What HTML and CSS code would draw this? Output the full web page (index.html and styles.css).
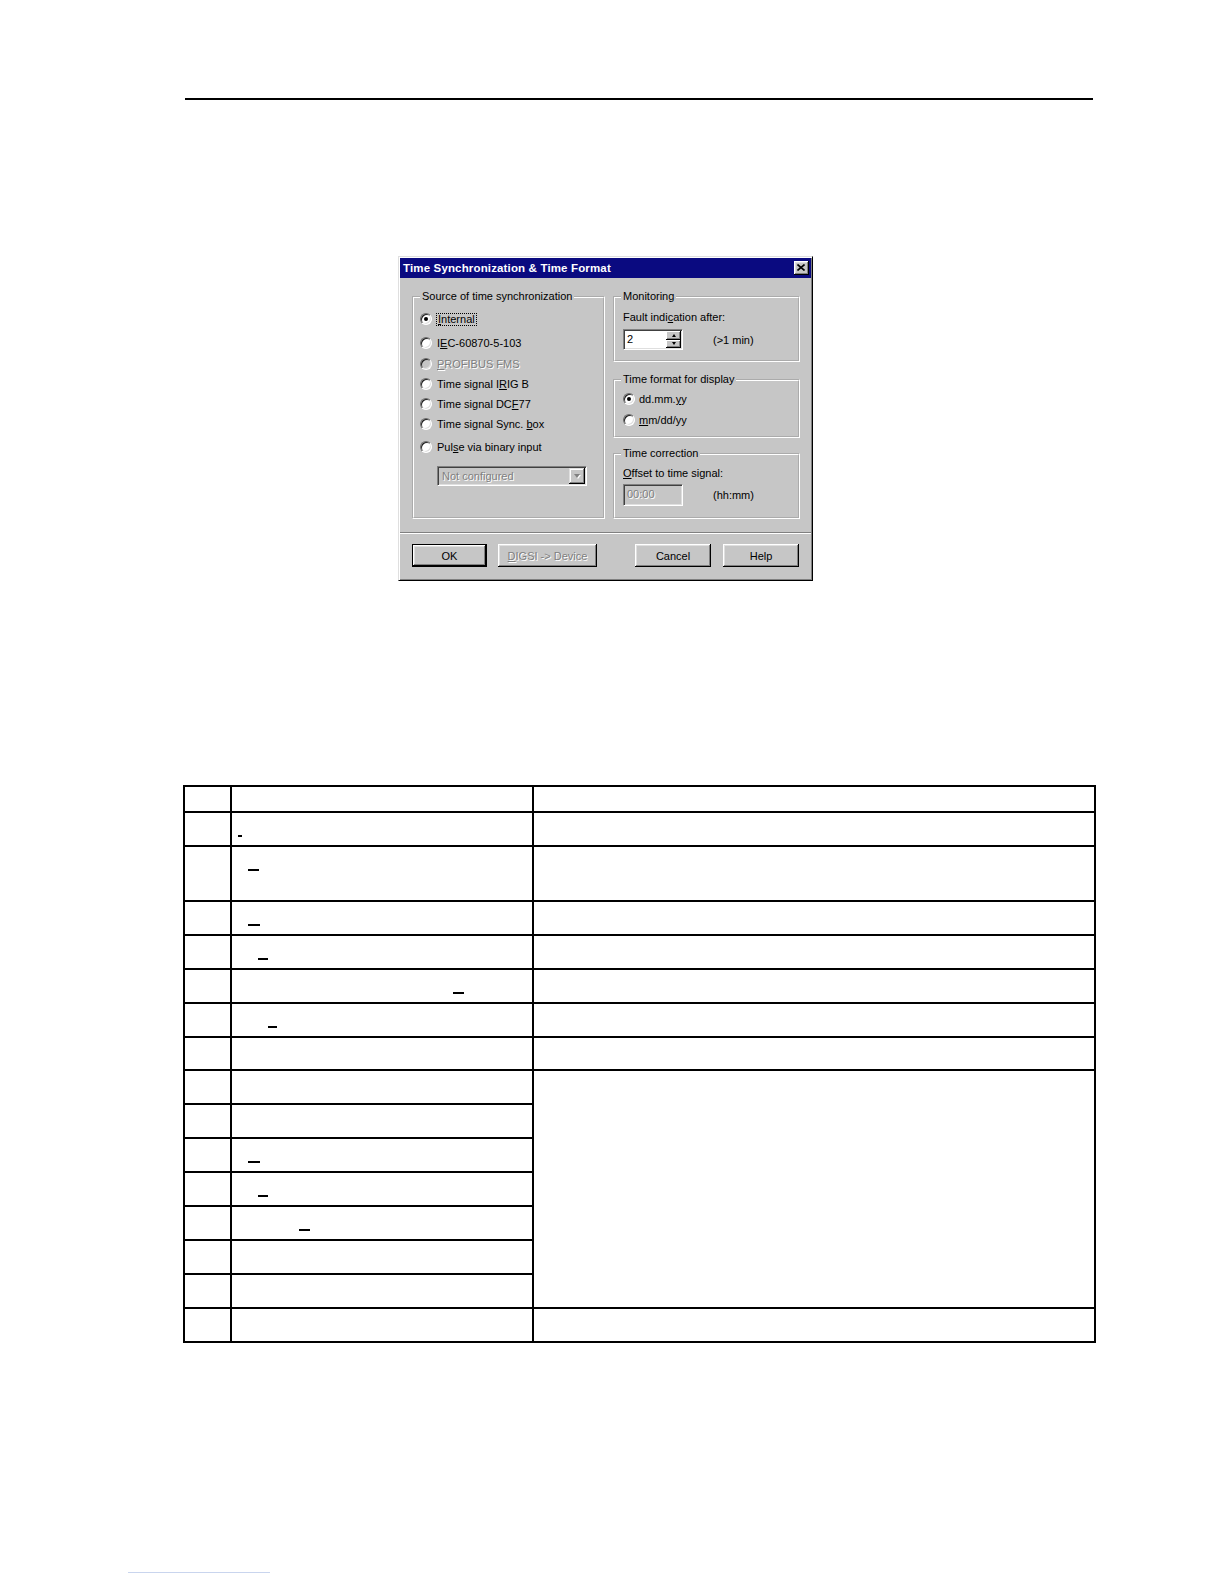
FILE: index.html
```html
<!DOCTYPE html>
<html>
<head>
<meta charset="utf-8">
<title>Time Synchronization &amp; Time Format</title>
<link rel="stylesheet" href="styles.css">
</head>
<body>
<div class="rule"></div>

<div class="dialog">
  <div class="titlebar">
    <span class="title">Time Synchronization &amp; Time Format</span>
    <span class="close"><svg width="8" height="7" viewBox="0 0 8 7"><path d="M0.5 0.5 L7.5 6.5 M7.5 0.5 L0.5 6.5" stroke="#000" stroke-width="1.6" fill="none"/></svg></span>
  </div>
  <div class="dlg-body">
    <fieldset class="group src">
      <legend>Source of time synchronization</legend>
      <div class="opt o-int"><span class="radio on"></span><span class="focus"><u>I</u>nternal</span></div>
      <div class="opt o-iec"><span class="radio"></span><span>I<u>E</u>C-60870-5-103</span></div>
      <div class="opt o-prof"><span class="radio dis"></span><span class="dtext"><u>P</u>ROFIBUS FMS</span></div>
      <div class="opt"><span class="radio"></span><span>Time signal I<u>R</u>IG B</span></div>
      <div class="opt"><span class="radio"></span><span>Time signal DC<u>F</u>77</span></div>
      <div class="opt"><span class="radio"></span><span>Time signal Sync. <u>b</u>ox</span></div>
      <div class="opt o-pulse"><span class="radio"></span><span>Pul<u>s</u>e via binary input</span></div>
      <div class="combo">
        <span class="combo-text dtext">Not configured</span>
        <span class="combo-btn"><span class="combo-arrow"></span></span>
      </div>
    </fieldset>
    <div class="right">
      <fieldset class="group mon">
        <legend>Monitoring</legend>
        <div class="line l-fault">Fault indi<u>c</u>ation after:</div>
        <div class="field-row r-spin">
          <div class="spinbox">
            <span class="spin-text">2</span>
            <span class="spin-btns">
              <span class="spin-btn"><span class="arr-up"></span></span>
              <span class="spin-btn"><span class="arr-down"></span></span>
            </span>
          </div>
          <span class="unit">(&gt;1 min)</span>
        </div>
      </fieldset>
      <fieldset class="group fmt">
        <legend>Time format for display</legend>
        <div class="opt o-dd"><span class="radio on"></span><span>dd.mm.<u>y</u>y</span></div>
        <div class="opt o-mm"><span class="radio"></span><span><u>m</u>m/dd/yy</span></div>
      </fieldset>
      <fieldset class="group cor">
        <legend>Time correction</legend>
        <div class="line l-offset"><u>O</u>ffset to time signal:</div>
        <div class="field-row r-off">
          <div class="textbox"><span class="dtext">00:00</span></div>
          <span class="unit">(hh:mm)</span>
        </div>
      </fieldset>
    </div>
  </div>
  <div class="sep"></div>
  <div class="buttons">
    <span class="btn default b-ok">OK</span>
    <span class="btn b-digsi"><span class="dtext"><u>D</u>IGSI -&gt; Device</span></span>
    <span class="btn b-cancel">Cancel</span>
    <span class="btn b-help">Help</span>
  </div>
</div>

<table class="grid">
  <colgroup><col class="k1"><col class="k2"><col class="k3"></colgroup>
  <tr class="h26"><td></td><td></td><td></td></tr>
  <tr class="h34"><td></td><td class="c2"><span class="u u2"></span></td><td></td></tr>
  <tr class="h55"><td></td><td class="c2"><span class="u u3"></span></td><td></td></tr>
  <tr class="h34"><td></td><td class="c2"><span class="u u4"></span></td><td></td></tr>
  <tr class="h34"><td></td><td class="c2"><span class="u u5"></span></td><td></td></tr>
  <tr class="h34"><td></td><td class="c2"><span class="u u6"></span></td><td></td></tr>
  <tr class="h34"><td></td><td class="c2"><span class="u u7"></span></td><td></td></tr>
  <tr class="h33"><td></td><td></td><td></td></tr>
  <tr class="h34"><td></td><td></td><td rowspan="7"></td></tr>
  <tr class="h34"><td></td><td></td></tr>
  <tr class="h34"><td></td><td class="c2"><span class="u u11"></span></td></tr>
  <tr class="h34"><td></td><td class="c2"><span class="u u12"></span></td></tr>
  <tr class="h34"><td></td><td class="c2"><span class="u u13"></span></td></tr>
  <tr class="h34"><td></td><td></td></tr>
  <tr class="h34"><td></td><td></td></tr>
  <tr class="h34"><td></td><td></td><td></td></tr>
</table>

<div class="footline"></div>
</body>
</html>
```

FILE: styles.css
```css
* { box-sizing: border-box; }

body {
  margin: 0;
  background: #fff;
  color: #000;
  font-family: "Liberation Sans", Arial, sans-serif;
  font-size: 11px;
}

.rule {
  margin: 98px 0 0 185px;
  width: 908px;
  height: 2px;
  background: #000;
}

/* ---------- dialog ---------- */
.dialog {
  margin: 156px 0 0 398px;
  width: 415px;
  background: #c6c6c6;
  border: 1px solid;
  border-color: #dfdfdf #000 #000 #dfdfdf;
  box-shadow: inset 1px 1px 0 #fff, inset -1px -1px 0 #808080;
  padding: 1px;
}

.titlebar {
  height: 20px;
  background: #0a0a80;
  color: #fff;
  font-weight: bold;
  display: flex;
  align-items: center;
  justify-content: space-between;
  padding: 0 2px 0 3px;
}
.title {
  font-size: 11.5px;
  letter-spacing: 0.15px;
  white-space: nowrap;
}

.close {
  width: 15px;
  height: 14px;
  background: #c6c6c6;
  box-shadow: inset -1px -1px 0 #000, inset 1px 1px 0 #fff, inset -2px -2px 0 #808080, inset 2px 2px 0 #dfdfdf;
  display: flex;
  align-items: center;
  justify-content: center;
  padding: 0 1px 1px 0;
}
.close svg { display: block; }

.dlg-body {
  display: flex;
  align-items: stretch;
  padding: 12px 11px 0 12px;
  gap: 8px;
}

.group {
  margin: 0;
  padding: 0 6px;
  border: 2px groove #fff;
  min-width: 0;
}
.group legend {
  padding: 0 2px;
  line-height: 13px;
  font-size: 11px;
}

.src { width: 193px; }

.right {
  width: 187px;
  display: flex;
  flex-direction: column;
}
.right .group { padding-left: 8px; }
.right .group legend { margin-left: -2px; }

.mon { padding-bottom: 10px; margin-bottom: 11px; }
.fmt { padding-bottom: 6px; margin-bottom: 9px; }
.cor { padding-bottom: 11px; }

.opt {
  display: flex;
  align-items: center;
  height: 20px;
  white-space: nowrap;
}
.o-int { margin-top: 6px; }
.o-iec { margin-top: 4px; }
.o-prof { margin-top: 1px; }
.o-pulse { margin-top: 3px; }
.o-dd { margin-top: 3px; }
.o-mm { margin-top: 1px; }

.radio {
  position: relative;
  flex: none;
  width: 12px;
  height: 12px;
  border-radius: 50%;
  background: #fff;
  border: 1px solid;
  border-color: #6a6a6a #fff #fff #6a6a6a;
  box-shadow: inset 1px 1px 0 #202020, inset -1px -1px 0 #dfdfdf;
  margin-right: 5px;
}
.radio.dis { background: #c6c6c6; }
.radio.on::after {
  content: "";
  position: absolute;
  left: 3px;
  top: 3px;
  width: 4px;
  height: 4px;
  border-radius: 50%;
  background: #000;
}
.right .radio { margin-right: 4px; }

.focus {
  border: 1px dotted #000;
  padding: 0 1px;
  line-height: 11px;
  margin-left: -1px;
}

.dtext {
  color: #808080;
  text-shadow: 1px 1px 0 #fff;
}

.combo {
  margin: 9px 0 0 17px;
  width: 150px;
  height: 20px;
  background: #c6c6c6;
  border: 1px solid;
  border-color: #808080 #fff #fff #808080;
  box-shadow: inset 1px 1px 0 #404040, inset -1px -1px 0 #dfdfdf;
  padding: 1px;
  display: flex;
  align-items: center;
}
.combo-text { flex: 1; padding-left: 3px; }
.combo-btn {
  width: 16px;
  height: 100%;
  background: #c6c6c6;
  box-shadow: inset -1px -1px 0 #000, inset 1px 1px 0 #dfdfdf, inset -2px -2px 0 #808080, inset 2px 2px 0 #fff;
  display: flex;
  align-items: center;
  justify-content: center;
}
.combo-arrow {
  width: 0;
  height: 0;
  border-left: 3.5px solid transparent;
  border-right: 3.5px solid transparent;
  border-top: 4px solid #808080;
  filter: drop-shadow(1px 1px 0 #fff);
}

.line { line-height: 14px; white-space: nowrap; }
.l-fault { margin-top: 7px; }
.l-offset { margin-top: 6px; }

.field-row {
  display: flex;
  align-items: center;
}
.r-spin { margin-top: 5px; }
.r-off { margin-top: 4px; }

.unit { margin-left: 30px; white-space: nowrap; }

.spinbox {
  width: 60px;
  height: 21px;
  background: #fff;
  border: 1px solid;
  border-color: #808080 #fff #fff #808080;
  box-shadow: inset 1px 1px 0 #404040, inset -1px -1px 0 #dfdfdf;
  padding: 1px;
  display: flex;
}
.spin-text { flex: 1; padding-left: 2px; line-height: 17px; }
.spin-btns {
  width: 15px;
  display: flex;
  flex-direction: column;
}
.spin-btn {
  flex: 1;
  background: #c6c6c6;
  box-shadow: inset -1px -1px 0 #000, inset 1px 1px 0 #fff, inset -2px -2px 0 #808080;
  display: flex;
  align-items: center;
  justify-content: center;
}
.arr-up, .arr-down {
  width: 0;
  height: 0;
  border-left: 2.5px solid transparent;
  border-right: 2.5px solid transparent;
}
.arr-up { border-bottom: 3px solid #000; }
.arr-down { border-top: 3px solid #000; }

.textbox {
  width: 60px;
  height: 22px;
  background: #c6c6c6;
  border: 1px solid;
  border-color: #808080 #fff #fff #808080;
  box-shadow: inset 1px 1px 0 #404040, inset -1px -1px 0 #dfdfdf;
  padding: 1px 3px;
  line-height: 16px;
}

.sep {
  margin-top: 13px;
  height: 2px;
  border-top: 1px solid #808080;
  border-bottom: 1px solid #fff;
}

.buttons {
  display: flex;
  padding: 10px 12px 12px 12px;
}
.btn {
  height: 23px;
  display: flex;
  align-items: center;
  justify-content: center;
  background: #c6c6c6;
  box-shadow: inset -1px -1px 0 #000, inset 1px 1px 0 #fff, inset -2px -2px 0 #808080, inset 2px 2px 0 #dfdfdf;
  white-space: nowrap;
}
.btn.default {
  border: 1px solid #000;
}
.b-ok { width: 75px; }
.b-digsi { width: 99px; margin-left: 11px; }
.b-cancel { width: 76px; margin-left: auto; }
.b-help { width: 76px; margin-left: 12px; }

/* ---------- table ---------- */
.grid {
  margin: 204px 0 0 183px;
  width: 913px;
  table-layout: fixed;
  border-collapse: separate;
  border-spacing: 0;
  border-top: 2px solid #000;
  border-left: 2px solid #000;
}
.k1 { width: 47px; }
.k2 { width: 302px; }
.k3 { width: 562px; }

.grid td {
  padding: 0;
  border-right: 2px solid #000;
  border-bottom: 2px solid #000;
  vertical-align: top;
}
.h26 { height: 26px; }
.h33 { height: 33px; }
.h34 { height: 34px; }
.h55 { height: 55px; }

.u {
  display: block;
  height: 2px;
  margin-top: 22px;
  background: #000;
}
.u2 { margin-left: 6px; width: 4px; }
.u3 { margin-left: 16px; width: 11px; }
.u4 { margin-left: 16px; width: 12px; }
.u5 { margin-left: 26px; width: 10px; }
.u6 { margin-left: 221px; width: 11px; }
.u7 { margin-left: 36px; width: 9px; }
.u11 { margin-left: 16px; width: 12px; }
.u12 { margin-left: 26px; width: 10px; }
.u13 { margin-left: 67px; width: 11px; }

.footline {
  margin: 229px 0 0 128px;
  width: 142px;
  height: 1px;
  background: #c9d5ee;
}
```
